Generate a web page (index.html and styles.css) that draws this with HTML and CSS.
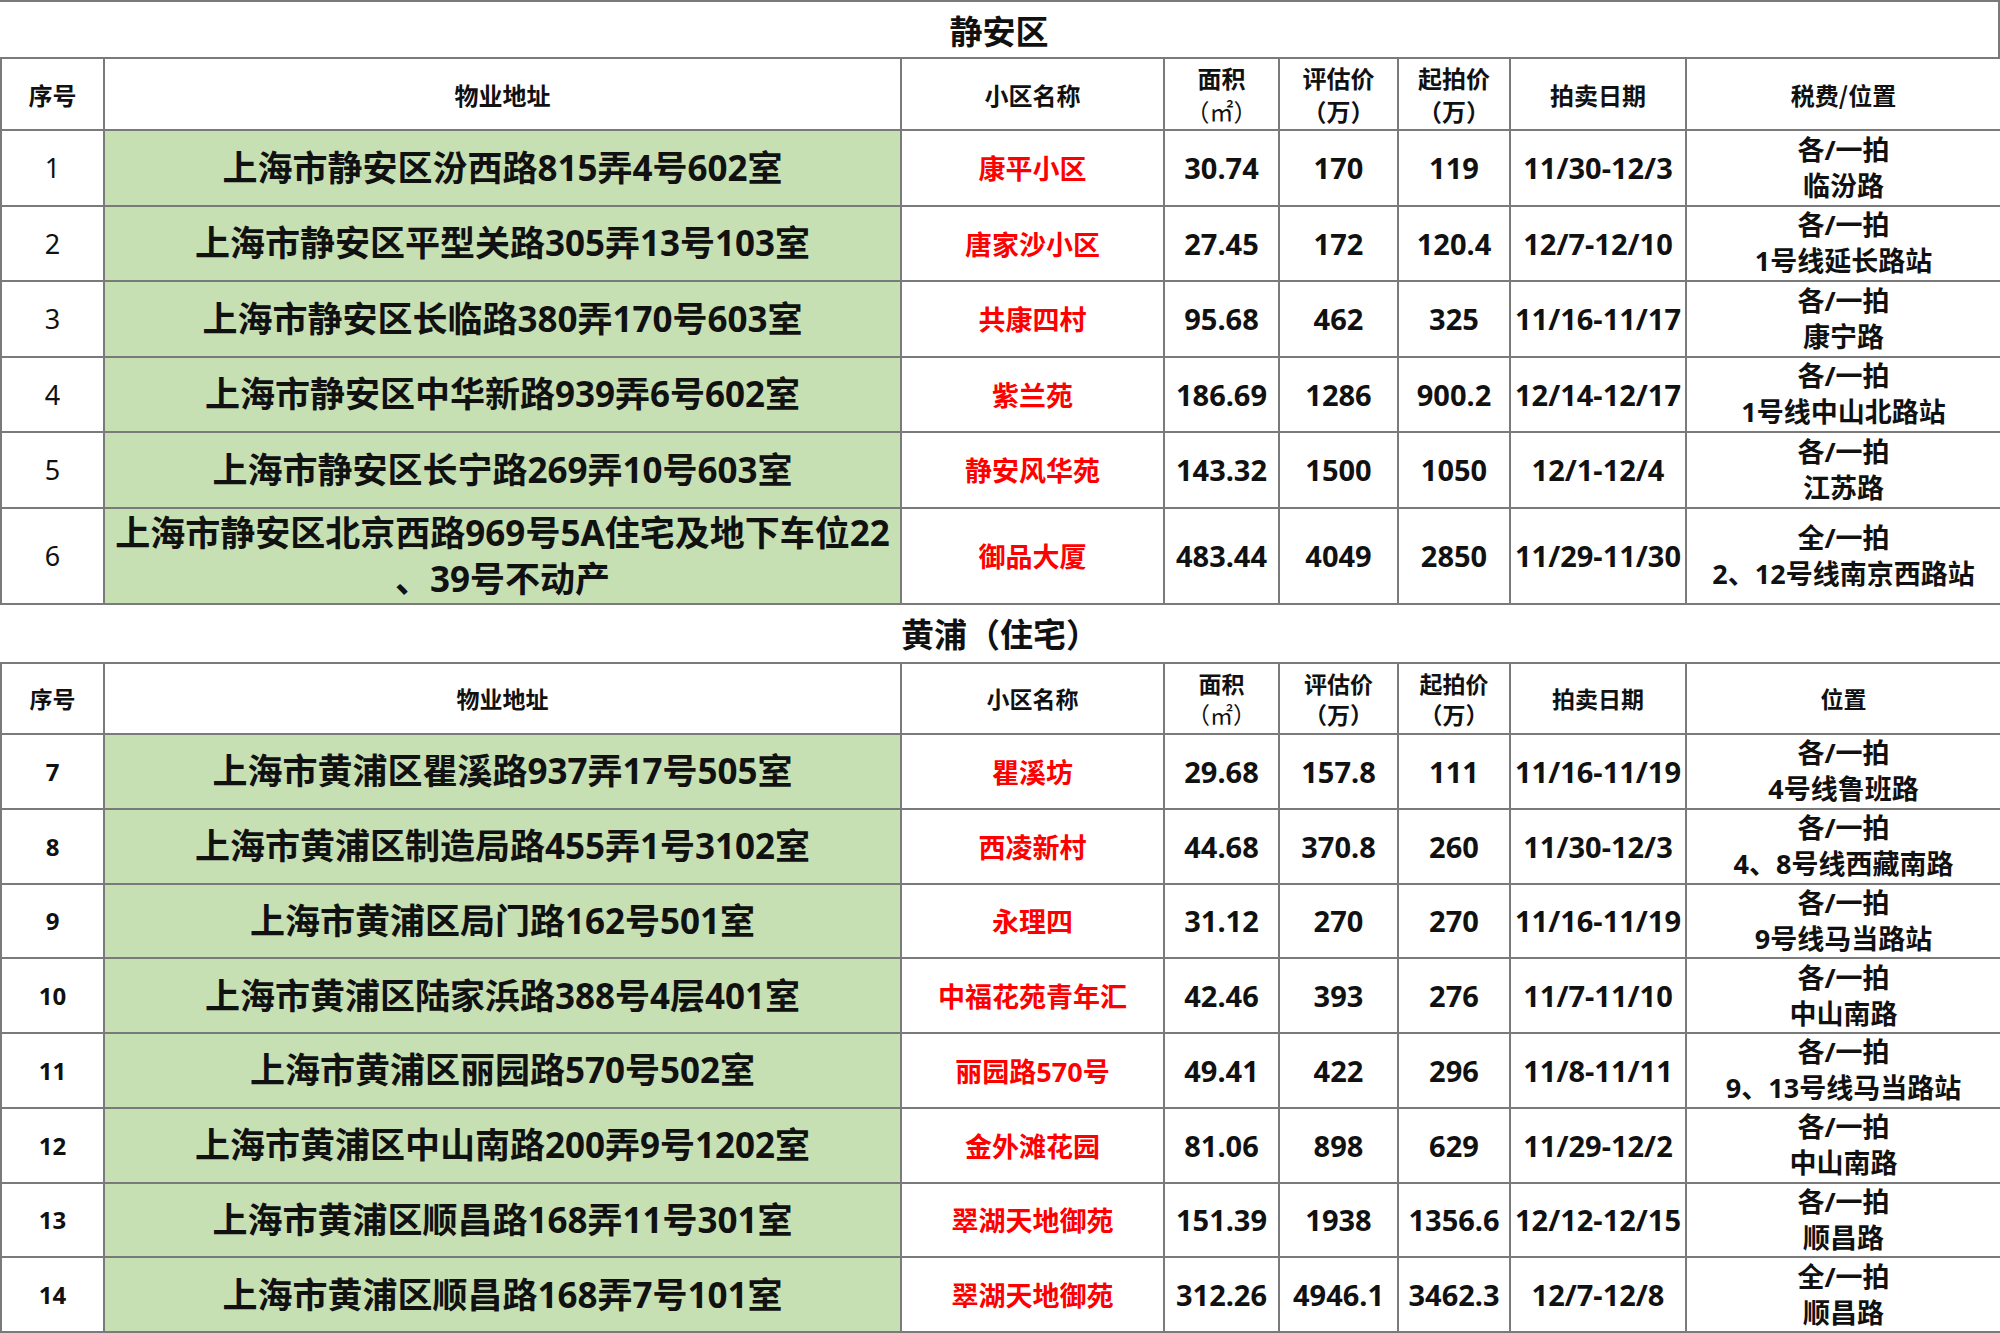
FILE: index.html
```html
<!DOCTYPE html>
<html lang="zh-CN">
<head>
<meta charset="utf-8">
<title>法拍房列表</title>
<link rel="stylesheet" href="styles.css">
</head>
<body>
<div class="sheet">
  <div class="title title-first">静安区</div>
  <table class="grid grid-a">
    <colgroup>
      <col class="c-no"><col class="c-addr"><col class="c-name"><col class="c-area"><col class="c-eval"><col class="c-start"><col class="c-date"><col class="c-loc">
    </colgroup>
    <thead>
      <tr class="head">
        <th>序号</th><th>物业地址</th><th>小区名称</th><th>面积<br><span class="unit">（㎡）</span></th><th>评估价<br>（万）</th><th>起拍价<br>（万）</th><th>拍卖日期</th><th>税费/位置</th>
      </tr>
    </thead>
    <tbody>
      <tr><td class="no">1</td><td class="addr">上海市静安区汾西路815弄4号602室</td><td class="name">康平小区</td><td class="num">30.74</td><td class="num">170</td><td class="num">119</td><td class="num">11/30-12/3</td><td class="loc">各/一拍<br>临汾路</td></tr>
      <tr><td class="no">2</td><td class="addr">上海市静安区平型关路305弄13号103室</td><td class="name">唐家沙小区</td><td class="num">27.45</td><td class="num">172</td><td class="num">120.4</td><td class="num">12/7-12/10</td><td class="loc">各/一拍<br>1号线延长路站</td></tr>
      <tr><td class="no">3</td><td class="addr">上海市静安区长临路380弄170号603室</td><td class="name">共康四村</td><td class="num">95.68</td><td class="num">462</td><td class="num">325</td><td class="num">11/16-11/17</td><td class="loc">各/一拍<br>康宁路</td></tr>
      <tr><td class="no">4</td><td class="addr">上海市静安区中华新路939弄6号602室</td><td class="name">紫兰苑</td><td class="num">186.69</td><td class="num">1286</td><td class="num">900.2</td><td class="num">12/14-12/17</td><td class="loc">各/一拍<br>1号线中山北路站</td></tr>
      <tr><td class="no">5</td><td class="addr">上海市静安区长宁路269弄10号603室</td><td class="name">静安风华苑</td><td class="num">143.32</td><td class="num">1500</td><td class="num">1050</td><td class="num">12/1-12/4</td><td class="loc">各/一拍<br>江苏路</td></tr>
      <tr class="tall"><td class="no">6</td><td class="addr addr-wrap">上海市静安区北京西路969号5A住宅及地下车位22<br>、39号不动产</td><td class="name">御品大厦</td><td class="num">483.44</td><td class="num">4049</td><td class="num">2850</td><td class="num">11/29-11/30</td><td class="loc">全/一拍<br>2、12号线南京西路站</td></tr>
    </tbody>
  </table>

  <div class="title">黄浦（住宅）</div>
  <table class="grid grid-b">
    <colgroup>
      <col class="c-no"><col class="c-addr"><col class="c-name"><col class="c-area"><col class="c-eval"><col class="c-start"><col class="c-date"><col class="c-loc">
    </colgroup>
    <thead>
      <tr class="head">
        <th>序号</th><th>物业地址</th><th>小区名称</th><th>面积<br><span class="unit">（㎡）</span></th><th>评估价<br>（万）</th><th>起拍价<br>（万）</th><th>拍卖日期</th><th>位置</th>
      </tr>
    </thead>
    <tbody>
      <tr><td class="no bold">7</td><td class="addr">上海市黄浦区瞿溪路937弄17号505室</td><td class="name">瞿溪坊</td><td class="num">29.68</td><td class="num">157.8</td><td class="num">111</td><td class="num">11/16-11/19</td><td class="loc">各/一拍<br>4号线鲁班路</td></tr>
      <tr><td class="no bold">8</td><td class="addr">上海市黄浦区制造局路455弄1号3102室</td><td class="name">西凌新村</td><td class="num">44.68</td><td class="num">370.8</td><td class="num">260</td><td class="num">11/30-12/3</td><td class="loc">各/一拍<br>4、8号线西藏南路</td></tr>
      <tr><td class="no bold">9</td><td class="addr">上海市黄浦区局门路162号501室</td><td class="name">永理四</td><td class="num">31.12</td><td class="num">270</td><td class="num">270</td><td class="num">11/16-11/19</td><td class="loc">各/一拍<br>9号线马当路站</td></tr>
      <tr><td class="no bold">10</td><td class="addr">上海市黄浦区陆家浜路388号4层401室</td><td class="name">中福花苑青年汇</td><td class="num">42.46</td><td class="num">393</td><td class="num">276</td><td class="num">11/7-11/10</td><td class="loc">各/一拍<br>中山南路</td></tr>
      <tr><td class="no bold">11</td><td class="addr">上海市黄浦区丽园路570号502室</td><td class="name">丽园路570号</td><td class="num">49.41</td><td class="num">422</td><td class="num">296</td><td class="num">11/8-11/11</td><td class="loc">各/一拍<br>9、13号线马当路站</td></tr>
      <tr><td class="no bold">12</td><td class="addr">上海市黄浦区中山南路200弄9号1202室</td><td class="name">金外滩花园</td><td class="num">81.06</td><td class="num">898</td><td class="num">629</td><td class="num">11/29-12/2</td><td class="loc">各/一拍<br>中山南路</td></tr>
      <tr><td class="no bold">13</td><td class="addr">上海市黄浦区顺昌路168弄11号301室</td><td class="name">翠湖天地御苑</td><td class="num">151.39</td><td class="num">1938</td><td class="num">1356.6</td><td class="num">12/12-12/15</td><td class="loc">各/一拍<br>顺昌路</td></tr>
      <tr><td class="no bold">14</td><td class="addr">上海市黄浦区顺昌路168弄7号101室</td><td class="name">翠湖天地御苑</td><td class="num">312.26</td><td class="num">4946.1</td><td class="num">3462.3</td><td class="num">12/7-12/8</td><td class="loc">全/一拍<br>顺昌路</td></tr>
    </tbody>
  </table>
</div>
</body>
</html>
```

FILE: styles.css
```css
html, body {
  margin: 0;
  padding: 0;
  background: #ffffff;
}

body {
  font-family: "Noto Sans", "Noto Sans CJK SC", sans-serif;
  color: #111111;
}

.sheet {
  width: 2000px;
  height: 1333px;
  overflow: hidden;
}

.title {
  height: 57px;
  line-height: 57px;
  text-align: center;
  font-family: "Noto Sans CJK SC", sans-serif;
  font-weight: 700;
  font-size: 33px;
  box-sizing: border-box;
}

.title-first {
  border-top: 2px solid #7a7a7a;
  border-right: 2px solid #7a7a7a;
}

.grid {
  width: 2000px;
  border-collapse: collapse;
  table-layout: fixed;
}

.grid th,
.grid td {
  border: 2px solid #7a7a7a;
  padding: 0;
  text-align: center;
  vertical-align: middle;
  overflow: hidden;
  white-space: nowrap;
}

.c-no { width: 103px; }
.c-addr { width: 797px; }
.c-name { width: 263px; }
.c-area { width: 115px; }
.c-eval { width: 119px; }
.c-start { width: 112px; }
.c-date { width: 176px; }
.c-loc { width: 315px; }

.head th {
  height: 70px;
  font-family: "Noto Sans CJK SC", sans-serif;
  font-weight: 700;
  font-size: 24px;
  line-height: 33px;
}

.grid-b .head th {
  height: 69px;
  font-size: 23px;
  line-height: 31px;
}

.unit {
  font-weight: 400;
}

.grid-a tbody td {
  height: 73.5px;
}

.grid-b tbody td {
  height: 72.75px;
}

.grid-a tbody tr.tall td {
  height: 94.5px;
}

.no {
  font-size: 27px;
  font-weight: 400;
}

.no.bold {
  font-size: 24px;
  font-weight: 700;
}

.addr {
  background: #c6e0b4;
  font-weight: 700;
  font-size: 35px;
  line-height: 44px;
}

.addr-wrap {
  line-height: 46px;
}

.name {
  color: #ff0000;
  font-weight: 700;
  font-size: 27px;
}

.num {
  font-weight: 700;
  font-size: 29px;
}

.loc {
  font-weight: 700;
  font-size: 27px;
  line-height: 36px;
}
```
